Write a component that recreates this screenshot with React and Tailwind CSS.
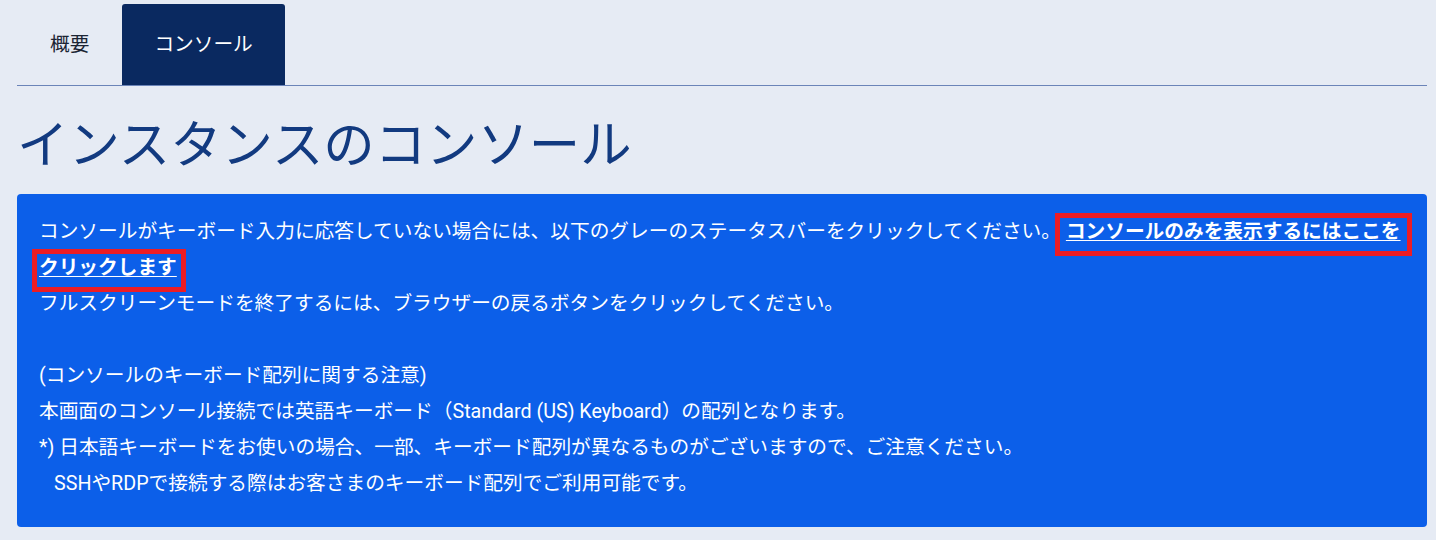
import React from "react";

const jp = { fontFamily: 'Roboto, "Noto Sans CJK JP", sans-serif' };

function Tabs() {
    return (
        <div className="flex items-end pt-1 border-b border-[#6b84b8]">
            <div className="h-[81px] px-[33px] flex items-center text-[19.7px] text-[#1b2433]">概要</div>
            <div className="h-[81px] px-[32px] flex items-center text-[19.7px] text-white bg-[#0a2960] rounded-t-[3px]">コンソール</div>
        </div>
    );
}

function Mark({children, first}) {
    return (
        <span className={(first ? "-ml-[11px] px-[6px] " : "-ml-[7px] pl-[2px] pr-[4px] ") + "border-[5px] border-[#ec1c24] pt-[2px] pb-[8px] font-bold underline underline-offset-2"}>
            {children}
        </span>
    );
}

export default function App() {
    return (
        <div className="min-h-[540px] bg-[#e6ebf4] pl-[17px] pr-[9px]" style={jp}>
            <Tabs/>
            <h1 className="mt-[29px] mb-[18px] text-[51.4px] leading-[61px] font-normal text-[#123a80]">
                インスタンスのコンソール
            </h1>
            <div className="bg-[#0c5fe9] rounded-[4px] pl-[22px] pr-4 pt-5 pb-[25px] text-white text-[19.7px] leading-[36px] whitespace-nowrap">
                <p>
                    コンソールがキーボード入力に応答していない場合には、以下のグレーのステータスバーをクリックしてください。{" "}
                    <a href="#" className="text-white">
                        <Mark first>コンソールのみを表示するにはここを</Mark>
                        <br/>
                        <Mark>クリックします</Mark>
                    </a>
                </p>
                <p>フルスクリーンモードを終了するには、ブラウザーの戻るボタンをクリックしてください。</p>
                <p>&nbsp;</p>
                <p>(コンソールのキーボード配列に関する注意)</p>
                <p>本画面のコンソール接続では英語キーボード（Standard (US) Keyboard）の配列となります。</p>
                <p>*) 日本語キーボードをお使いの場合、一部、キーボード配列が異なるものがございますので、ご注意ください。</p>
                <p className="pl-[15px]">SSHやRDPで接続する際はお客さまのキーボード配列でご利用可能です。</p>
            </div>
        </div>
    );
}
